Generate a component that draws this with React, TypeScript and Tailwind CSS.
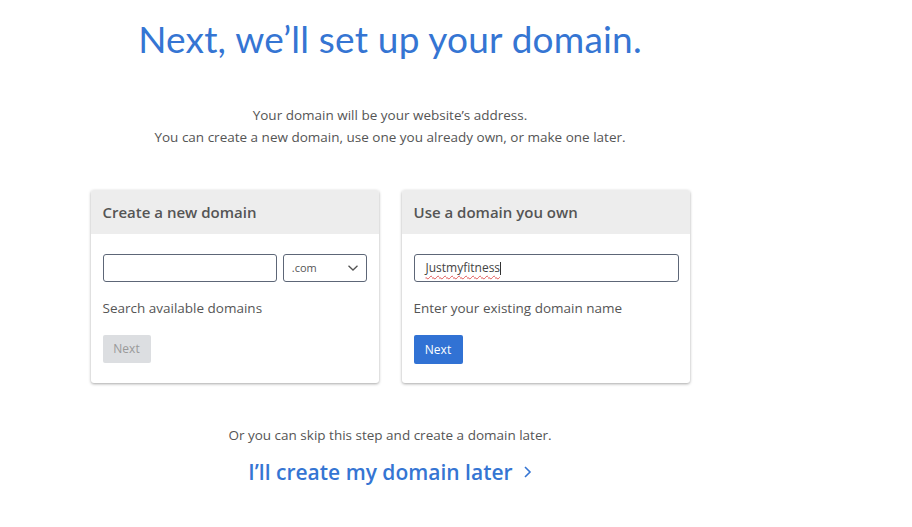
import React from 'react'

function ChevronDown() {
  return (
    <svg width="12" height="8" viewBox="0 0 12 8" fill="none" stroke="#555" strokeWidth="1.3">
      <path d="M1.5 1.8 L6 6 L10.5 1.8" />
    </svg>
  )
}

function ChevronRight() {
  return (
    <svg width="9" height="14" viewBox="0 0 9 14" fill="none" stroke="#3575d3" strokeWidth="1.6">
      <path d="M2 2 L7 7 L2 12" />
    </svg>
  )
}

type CardProps = {
  title: string
  children: React.ReactNode
}

function Card({ title, children }: CardProps) {
  return (
    <div className="w-[288px] h-[193px] bg-white rounded-[3px] shadow-[0_1px_3px_rgba(0,0,0,0.35)] overflow-hidden">
      <div className="h-[44px] bg-[#ededed] px-3 flex items-center">
        <h3 className="text-[15px] font-semibold text-[#555]">{title}</h3>
      </div>
      <div className="px-3 pt-[20px]">{children}</div>
    </div>
  )
}

export default function App() {
  return (
    <div className="w-[912px] h-[527px] bg-white font-['Open_Sans',sans-serif]">
      <div className="w-[780px] flex flex-col items-center">
        <h1 className="mt-[14px] text-[37px] leading-[50px] text-[#3575d3] font-['Lato',sans-serif] tracking-[0.2px]">
          Next, we’ll set up your domain.
        </h1>
        <div className="mt-[40px] text-center text-[13.5px] leading-[22px] text-[#555]">
          <p>Your domain will be your website’s address.</p>
          <p>You can create a new domain, use one you already own, or make one later.</p>
        </div>

        <div className="mt-[42px] flex gap-[23px]">
          <Card title="Create a new domain">
            <div className="flex gap-[6px]">
              <input className="w-[175px] h-[28px] border border-[#5d6677] rounded-[3px] outline-none px-2 text-[12px]" />
              <div className="w-[84px] h-[28px] border border-[#5d6677] rounded-[3px] flex items-center justify-between pl-[8px] pr-[7px]">
                <span className="text-[11px] text-[#555]">.com</span>
                <ChevronDown />
              </div>
            </div>
            <p className="mt-[16px] text-[13.5px] text-[#555] leading-[20px]">Search available domains</p>
            <button className="mt-[17px] w-[48px] h-[28px] rounded-[2px] bg-[#dcdee1] text-[12px] text-[#999]">Next</button>
          </Card>
          <Card title="Use a domain you own">
            <div className="w-[265px] h-[28px] border border-[#5d6677] rounded-[3px] flex items-center pl-[11px]">
              <span className="text-[12px] text-[#444] underline decoration-wavy decoration-[#e05555] decoration-[1px] underline-offset-[3px]">Justmyfitness</span>
              <span className="w-px h-[13px] bg-[#333]" />
            </div>
            <p className="mt-[16px] text-[13.5px] text-[#555] leading-[20px]">Enter your existing domain name</p>
            <button className="mt-[17px] w-[49px] h-[29px] rounded-[2px] bg-[#3172d4] text-[12px] text-white">Next</button>
          </Card>
        </div>

        <p className="mt-[42px] text-[13.5px] text-[#555] leading-[20px]">Or you can skip this step and create a domain later.</p>
        <a className="mt-[12px] flex items-center gap-[10px] text-[21px] font-semibold text-[#3575d3] leading-[30px]">
          I’ll create my domain later
          <ChevronRight />
        </a>
      </div>
    </div>
  )
}
